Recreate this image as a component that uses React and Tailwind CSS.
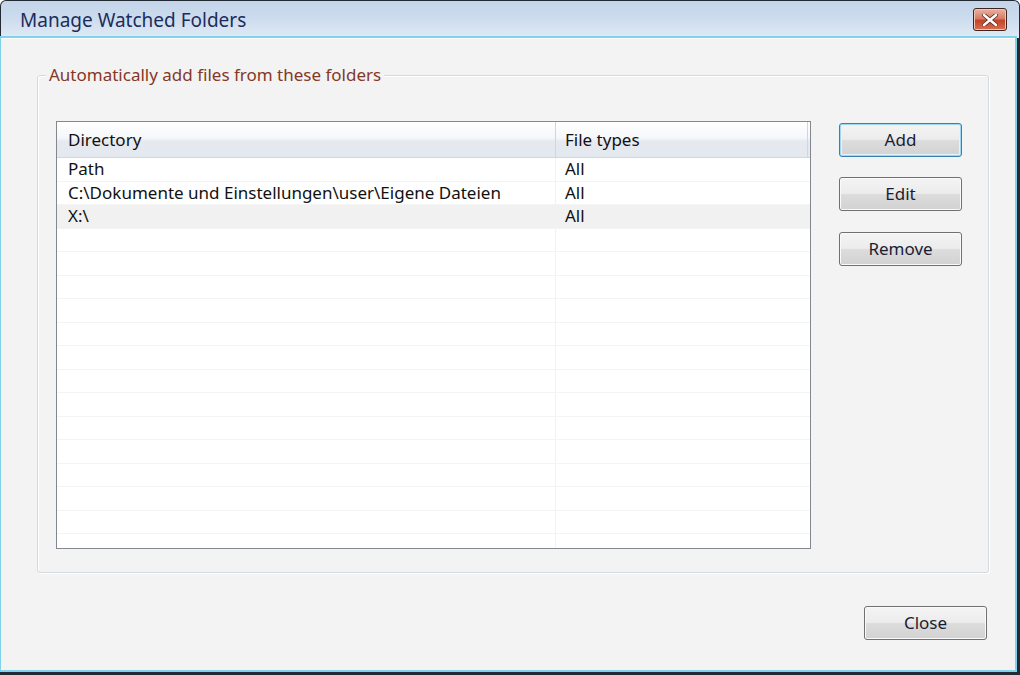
import React from "react";

const font = { fontFamily: '"Noto Sans", "Open Sans", "Liberation Sans", sans-serif' };

function WinButton({ children, focused }) {
  return (
    <button
      className={
        "w-[123px] h-[34px] rounded-[3px] border text-[17px] text-[#1a1d33] flex items-center justify-center bg-[linear-gradient(to_bottom,#f4f4f4_0%,#ececec_48%,#dcdcdc_52%,#d2d2d2_100%)] " +
        (focused
          ? "border-[#3c7fb1] shadow-[inset_0_0_0_1px_#9fd6f0,inset_0_0_0_2px_#e4f4fb]"
          : "border-[#707070] shadow-[inset_0_0_0_1px_#fafafa]")
      }
    >
      {children}
    </button>
  );
}

const rows = [
  ["Path", "All"],
  ["C:\\Dokumente und Einstellungen\\user\\Eigene Dateien", "All"],
  ["X:\\", "All"],
];

export default function App() {
  const empty = Array.from({ length: 15 });
  return (
    <div
      className="w-[1020px] h-[675px] bg-[#232a33] rounded-t-[6px] overflow-hidden flex flex-col p-[1px]"
      style={font}
    >
      {/* title bar */}
      <div className="h-[37px] rounded-t-[5px] bg-[linear-gradient(to_bottom,#c4d5ea_0%,#cddcee_50%,#e2ebf6_100%)] flex items-start justify-between pl-[19px] pr-[12px] pt-[7px] shrink-0">
        <span className="text-[19px] text-[#1b2d5c] leading-[24px]">Manage Watched Folders</span>
        <div className="w-[34px] h-[23px] rounded-[3px] border border-[#3d2522] bg-[linear-gradient(to_bottom,#eab1a3_0%,#d97c64_45%,#c4432a_55%,#d8704f_100%)] flex items-center justify-center shadow-[inset_0_0_0_1px_#f3c4b8]">
          <svg width="16" height="12" viewBox="0 0 16 12">
            <path d="M2 1 L14 11 M14 1 L2 11" stroke="#5a2a22" strokeWidth="4.2" strokeLinecap="round" />
            <path d="M2 1 L14 11 M14 1 L2 11" stroke="#ffffff" strokeWidth="2.6" strokeLinecap="round" />
          </svg>
        </div>
      </div>

      {/* body */}
      <div className="flex-1 flex flex-col bg-[#f3f3f3] border-t border-white mr-[4px] mb-[4px] shadow-[0_0_0_2px_#7fd4ea]">
        <div className="pl-[36px] pr-[26px] pt-[36px]">
          {/* group box */}
          <div className="relative h-[498px] border border-[#d5dadf] rounded-[3px] shadow-[inset_1px_1px_0_#ffffff,1px_1px_0_#ffffff] flex pl-[18px] pt-[45px] pr-[25px]">
            <span className="absolute left-[8px] -top-[12px] px-[3px] bg-[#f3f3f3] text-[17px] leading-[22px] text-[#843826]">
              Automatically add files from these folders
            </span>

            {/* list view */}
            <div className="w-[755px] shrink-0 h-[428px] border border-[#828790] bg-white flex flex-col overflow-hidden">
              <div className="h-[36px] shrink-0 flex border-b border-[#d5d5d5] bg-[linear-gradient(to_bottom,#ffffff_0%,#f5f7fa_45%,#e6eaf0_55%,#e4e9ef_100%)]">
                <div className="w-[499px] border-r border-[#d5d5d5] pl-[11px] flex items-center text-[17px] text-[#111]">
                  Directory
                </div>
                <div className="w-[252px] pl-[9px] flex items-center text-[17px] text-[#111] border-r border-[#d5d5d5]">
                  File types
                </div>
              </div>
              <div className="flex-1 flex flex-col">
                {rows.map((r, i) => (
                  <div
                    key={i}
                    className={
                      "h-[23.5px] shrink-0 flex border-b border-[#f4f4f4] text-[17px] text-[#111] leading-[22px] " +
                      (i === 2 ? "bg-[#f1f1f1]" : "")
                    }
                  >
                    <div className="w-[499px] pl-[11px] border-r border-[#f2f2f2] whitespace-nowrap overflow-hidden">{r[0]}</div>
                    <div className="w-[252px] pl-[9px]">{r[1]}</div>
                  </div>
                ))}
                {empty.map((_, i) => (
                  <div key={i} className="h-[23.5px] shrink-0 flex border-b border-[#f4f4f4]">
                    <div className="w-[499px] border-r border-[#f2f2f2]" />
                    <div className="w-[252px]" />
                  </div>
                ))}
              </div>
            </div>

            {/* buttons */}
            <div className="ml-[28px] mt-[2px] flex flex-col">
              <WinButton focused>Add</WinButton>
              <div className="mt-[20px]">
                <WinButton>Edit</WinButton>
              </div>
              <div className="mt-[21px]">
                <WinButton>Remove</WinButton>
              </div>
            </div>
          </div>
        </div>

        <div className="flex justify-end pr-[28px] pt-[33px]">
          <WinButton>Close</WinButton>
        </div>
      </div>
    </div>
  );
}
